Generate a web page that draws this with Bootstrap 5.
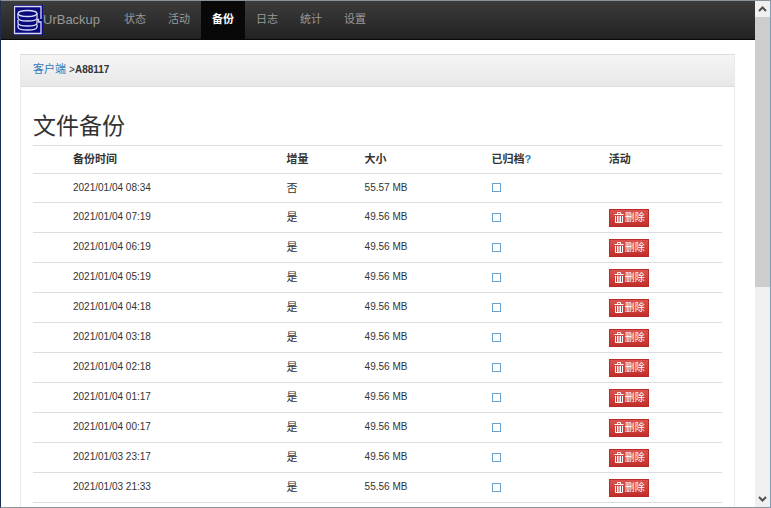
<!DOCTYPE html>
<html lang="zh-CN">
<head>
<meta charset="utf-8">
<meta name="viewport" content="width=device-width, initial-scale=1">
<title>UrBackup</title>
<link href="https://cdn.jsdelivr.net/npm/bootstrap@5.3.0/dist/css/bootstrap.min.css" rel="stylesheet">
<style>
body { font-family: "Liberation Sans", "Noto Sans CJK SC", sans-serif; font-size: 11px; line-height: 16px; color: #333; background: #fff; }
.app-frame { border: 1px solid #8b9398; border-left-color: #1b2f50; border-right-color: #7f9db9; }
.top-bar { height: 39px; background: linear-gradient(#3c3c3c, #222); border-bottom: 1px solid #080808; }
.top-bar .navbar-brand { height: 38px; font-size: 13px; color: #999; }
.top-bar .navbar-nav .nav-link { color: #999; height: 38px; line-height: 36px; padding: 0 11px; }
.top-bar .navbar-nav .nav-link.active { color: #fff; background: #080808; font-weight: 700; }
.top-menu { margin-left: 13px; }
.page-area { padding: 14px 20px 0 19px; }
.client-panel { border: 1px solid #ddd; border-color: #ddd #eaeaea; border-radius: 0; }
.client-panel .card-header { background: linear-gradient(#f5f5f5, #e8e8e8); border-color: #ddd; border-radius: 0; padding: 6px 12px 8px; }
.client-panel .card-body { padding: 23px 12px; }
.latin { font-size: 10px; }
a { color: #337ab7; text-decoration: none; }
h1 { font-size: 23px; line-height: 32px; font-weight: 400; margin: 0 0 3px; }
.backups { table-layout: fixed; color: #333; border-color: #ddd; margin: 0; border-top: 1px solid #ddd; }
.backups > :not(caption) > * > * { padding: 0 6px 1px; height: 30px; vertical-align: middle; background: none; }
.backups > thead > tr > th { height: 28px; border-bottom-width: 1px; }
.backups > tbody > tr:first-child > td { height: 29px; }
.c-gap { width: 34px; } .c-time { width: 31%; } .c-inc { width: 78px; } .c-size { width: 127px; } .c-arch { width: 17%; }
.tick { appearance: none; display: block; width: 9px; height: 9px; margin: 0; border: 1px solid #6ba3d0; background: #fff; }
.tick:checked { background: #337ab7; }
.del-btn { display: flex; align-items: center; gap: 1px; height: 18px; padding: 0 3px 0 4px; margin-top: 1px; font-size: 10px; line-height: 14px; border: 1px solid #b92c28; border-radius: 0; color: #fff; background: linear-gradient(#d9534f, #c12e2a); }
.del-btn:hover { color: #fff; background: #c12e2a; }
.scroll-rail { width: 15px; background: #f0f0f0; }
.scroll-rail button { height: 16px; padding: 0; border: 0; background: none; line-height: 0; }
.scroll-thumb { height: 57%; background: #cdcdcd; }
</style>
<script src="https://cdn.jsdelivr.net/npm/bootstrap@5.3.0/dist/js/bootstrap.bundle.min.js"></script>
</head>
<body>
<svg class="d-none">
  <symbol id="bin" viewBox="0 0 10 12"><path d="M3.500 2V.5h3V2M.5 2.500h9M1.500 4v6.500h7V4M3.500 4v6M5 4v6M6.500 4v6" fill="none" stroke="#fff" stroke-width="1"/></symbol>
</svg>
<div class="app-frame d-flex vh-100 overflow-hidden">
  <div class="flex-grow-1 overflow-hidden">
    <nav class="top-bar navbar navbar-expand p-0 align-items-start">
      <a class="navbar-brand d-flex align-items-center p-0 m-0 ps-2 ms-1" href="#">
        <svg width="30" height="30" viewBox="0 0 30 30" aria-hidden="true">
          <path fill="#0a0a80" d="M0 0h30v30H0z"/>
          <g fill="none" stroke="#d8daf0" stroke-width="1.300">
            <path d="M28 14V1.500H1.500v27H28V17h-2.500v-2.500H24"/>
            <ellipse cx="14.500" cy="8.500" rx="9.500" ry="3"/>
            <path d="M5 8.500V13c0 4 19 4 19 0V8.500M5 15v3c0 4 19 4 19 0v-3M5 19.500V22c0 4 19 4 19 0v-2.500"/>
          </g>
        </svg>
        <span>UrBackup</span>
      </a>
      <ul class="navbar-nav top-menu">
        <li class="nav-item"><a class="nav-link" href="#">状态</a></li>
        <li class="nav-item"><a class="nav-link" href="#">活动</a></li>
        <li class="nav-item"><a class="nav-link active" aria-current="page" href="#">备份</a></li>
        <li class="nav-item"><a class="nav-link" href="#">日志</a></li>
        <li class="nav-item"><a class="nav-link" href="#">统计</a></li>
        <li class="nav-item"><a class="nav-link" href="#">设置</a></li>
      </ul>
    </nav>
    <main class="page-area container-fluid">
      <div class="card client-panel">
        <div class="card-header"><a href="#">客户端</a> <span class="latin">&gt;<b>A88117</b></span></div>
        <div class="card-body">
          <h1>文件备份</h1>
          <table class="table backups">
            <thead><tr><th class="c-gap"></th><th class="c-time">备份时间</th><th class="c-inc">增量</th><th class="c-size">大小</th><th class="c-arch">已归档<a href="#">?</a></th><th>活动</th></tr></thead>
            <tbody id="rows"></tbody>
          </table>
        </div>
      </div>
    </main>
  </div>
  <div class="scroll-rail d-flex flex-column flex-shrink-0">
    <button type="button" aria-label="向上滚动"><svg width="9" height="6" viewBox="0 0 9 6"><path d="M1 5l3.500-3.500L8 5" fill="none" stroke="#505050" stroke-width="2"/></svg></button>
    <div class="flex-grow-1"><div class="scroll-thumb"></div></div>
    <button type="button" aria-label="向下滚动"><svg width="9" height="6" viewBox="0 0 9 6"><path d="M1 1l3.500 3.500L8 1" fill="none" stroke="#505050" stroke-width="2"/></svg></button>
  </div>
</div>
<script>
const backups = [
  ["2021/01/04 08:34", "否", "55.57 MB"], ["2021/01/04 07:19", "是", "49.56 MB"],
  ["2021/01/04 06:19", "是", "49.56 MB"], ["2021/01/04 05:19", "是", "49.56 MB"],
  ["2021/01/04 04:18", "是", "49.56 MB"], ["2021/01/04 03:18", "是", "49.56 MB"],
  ["2021/01/04 02:18", "是", "49.56 MB"], ["2021/01/04 01:17", "是", "49.56 MB"],
  ["2021/01/04 00:17", "是", "49.56 MB"], ["2021/01/03 23:17", "是", "49.56 MB"],
  ["2021/01/03 21:33", "是", "55.56 MB"]
];
document.getElementById("rows").innerHTML = backups.map(([time, inc, size], i) => `
  <tr><td></td><td class="latin">${time}</td><td>${inc}</td><td class="latin">${size}</td>
  <td><input class="tick" type="checkbox" aria-label="归档 ${time}"></td>
  <td>${i ? '<button type="button" class="btn del-btn"><svg width="10" height="12" aria-hidden="true"><use href="#bin"/></svg>删除</button>' : ""}</td></tr>`).join("");
</script>
</body>
</html>
